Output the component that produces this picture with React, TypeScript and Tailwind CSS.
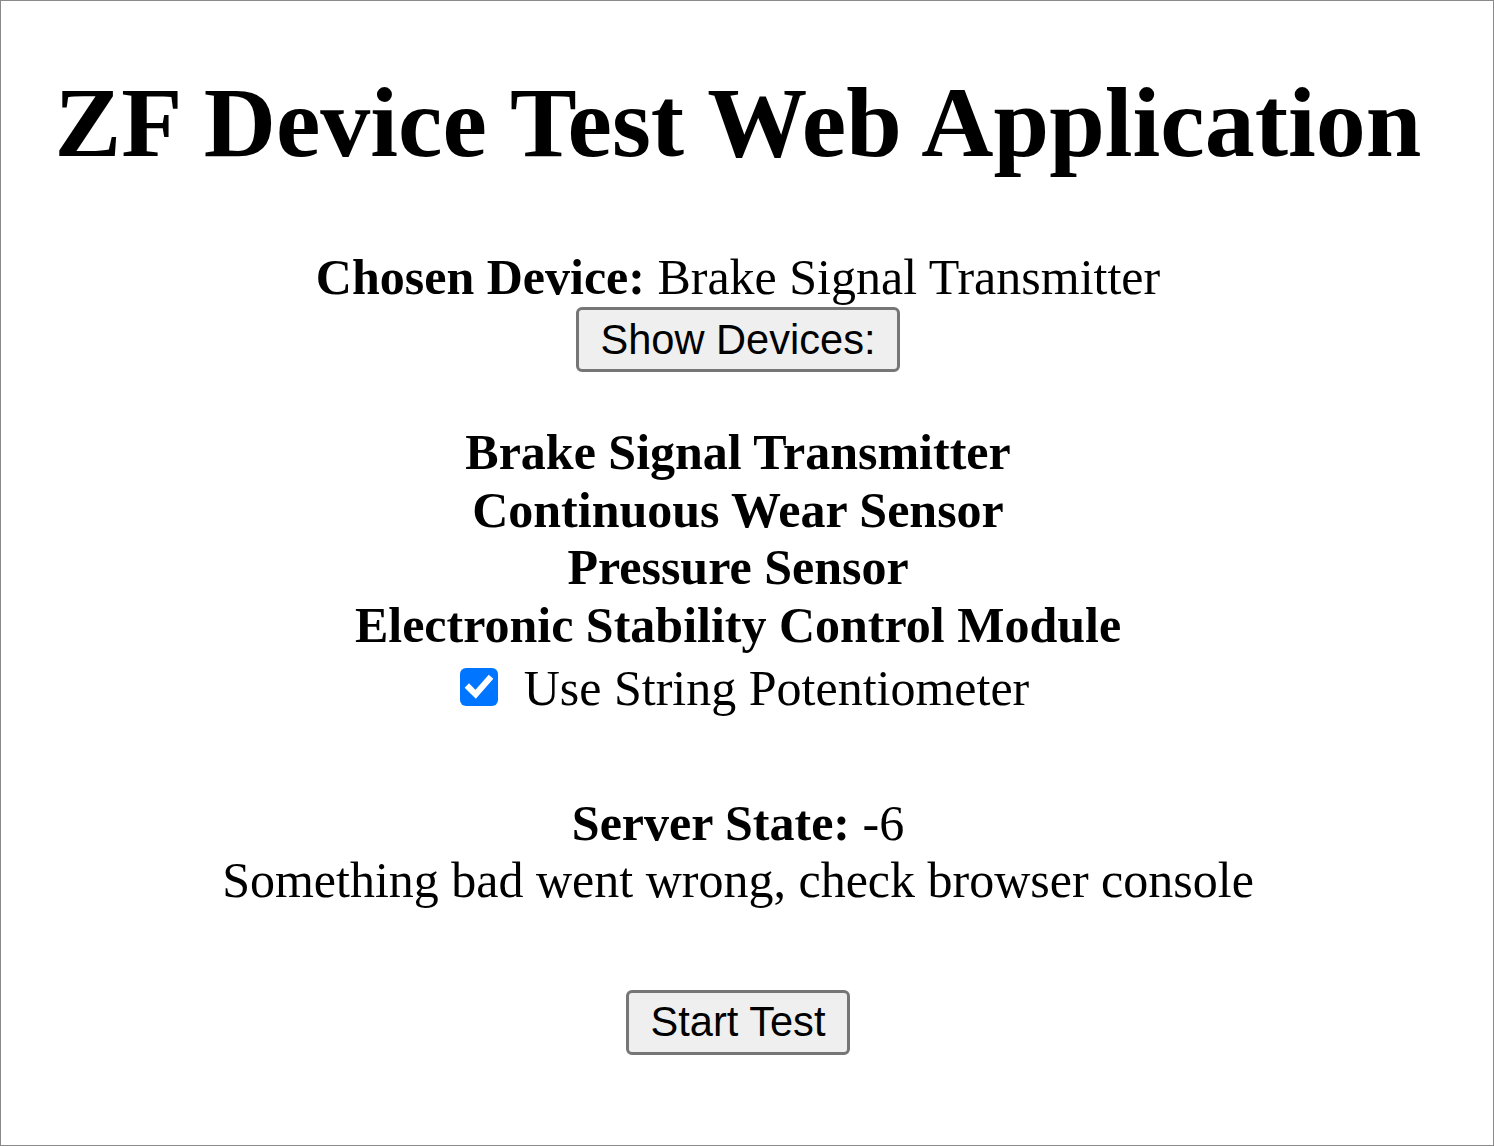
const devices = [
  "Brake Signal Transmitter",
  "Continuous Wear Sensor",
  "Pressure Sensor",
  "Electronic Stability Control Module",
];

function CheckBox() {
  return (
    <span className="mt-[8px] flex h-[38px] w-[38px] shrink-0 items-center justify-center rounded-[6px] bg-[#0075ff]">
      <svg viewBox="0 0 24 24" className="h-[32px] w-[32px]" fill="none">
        <path d="M4.5 12.5 L9.5 17.5 L19.5 6" stroke="white" strokeWidth="4.6" strokeLinecap="square" />
      </svg>
    </span>
  );
}

export default function App() {
  return (
    <div className="box-border h-[1146px] w-full border border-[#8a8a8a] bg-white text-black">
      <div className="flex flex-col items-center pr-[18px] font-['Liberation_Serif',serif] text-[50px] leading-[57.5px]">
        {/* title */}
        <h1 className="mt-[66px] text-[100px] font-bold leading-[112px] whitespace-nowrap">
          ZF Device Test Web Application
        </h1>

        {/* chosen device */}
        <div className="mt-[70px] whitespace-nowrap">
          <b>Chosen Device:</b> Brake Signal Transmitter
        </div>
        <button className="mt-[0.5px] h-[65px] w-[324px] rounded-[6px] border-[3px] border-[#767676] bg-[#efefef] font-['Liberation_Sans',sans-serif] text-[41.6px] leading-none">
          Show Devices:
        </button>

        {/* device list */}
        <ul className="mt-[52px] flex flex-col items-center font-bold">
          {devices.map((d) => (
            <li key={d} className="whitespace-nowrap">
              {d}
            </li>
          ))}
        </ul>
        <label className="mt-[6px] ml-[13px] flex items-start gap-[26px] whitespace-nowrap">
          <CheckBox />
          <span>Use String Potentiometer</span>
        </label>

        {/* server state */}
        <div className="mt-[77px] whitespace-nowrap">
          <b>Server State:</b> -6
        </div>
        <div className="whitespace-nowrap">Something bad went wrong, check browser console</div>

        <button className="mt-[80px] h-[65px] w-[224px] rounded-[6px] border-[3px] border-[#767676] bg-[#efefef] font-['Liberation_Sans',sans-serif] text-[41.6px] leading-none">
          Start Test
        </button>
      </div>
    </div>
  );
}
